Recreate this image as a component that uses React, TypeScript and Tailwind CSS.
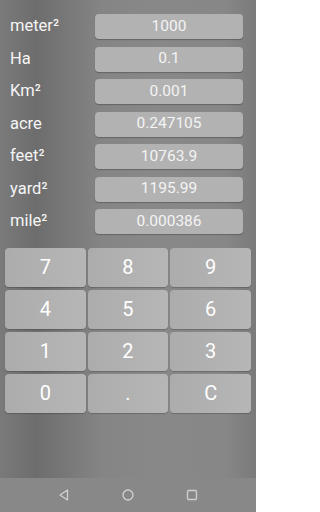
const rows: [string, string][] = [
  ['meter²', '1000'],
  ['Ha', '0.1'],
  ['Km²', '0.001'],
  ['acre', '0.247105'],
  ['feet²', '10763.9'],
  ['yard²', '1195.99'],
  ['mile²', '0.000386'],
];

const keys = ['7', '8', '9', '4', '5', '6', '1', '2', '3', '0', '.', 'C'];

export default function App() {
  return (
    <div
      className="flex h-[512px] w-[256px] flex-col overflow-hidden bg-[linear-gradient(90deg,#7a7a7a_0%,#6d6d6d_14%,#858585_40%,#888888_60%,#878787_88%,#7a7a7a_100%)]"
      style={{ fontFamily: 'Roboto, "Liberation Sans", sans-serif' }}
    >
      <div className="flex flex-col gap-[7.5px] pt-[14px]">
        {rows.map(([label, value]) => (
          <div key={label} className="flex h-[25px] items-center">
            <div className="w-[95px] pl-[10px] text-[16.5px] text-[#f5f5f5]">{label}</div>
            <div className="flex h-[25px] w-[148px] items-center justify-center rounded-[4px] bg-[#b2b2b2] text-[15.5px] text-[#f4f4f4] shadow-[0_1px_1px_rgba(0,0,0,0.25)]">
              {value}
            </div>
          </div>
        ))}
      </div>

      <div className="mt-[13.5px] grid grid-cols-3 gap-x-[2px] gap-y-[3px] px-[5px]">
        {keys.map((k) => (
          <div
            key={k}
            className="flex h-[39px] items-center justify-center rounded-[4px] bg-[linear-gradient(90deg,#acacac,#b6b6b6)] text-[20px] text-white shadow-[0_1px_1px_rgba(0,0,0,0.2)]"
          >
            {k}
          </div>
        ))}
      </div>

      <div className="flex-1" />

      <div className="flex h-[34px] items-center justify-center gap-[50px] bg-[#888888]">
        <svg width="14" height="14" viewBox="0 0 14 14">
          <path d="M10.5 2 L3 7 L10.5 12 Z" fill="none" stroke="#d0d0d0" strokeWidth="1.3" strokeLinejoin="round" />
        </svg>
        <svg width="14" height="14" viewBox="0 0 14 14">
          <circle cx="7" cy="7" r="5" fill="none" stroke="#d0d0d0" strokeWidth="1.3" />
        </svg>
        <svg width="14" height="14" viewBox="0 0 14 14">
          <rect x="2.5" y="2.5" width="9" height="9" rx="1" fill="none" stroke="#d0d0d0" strokeWidth="1.3" />
        </svg>
      </div>
    </div>
  );
}
